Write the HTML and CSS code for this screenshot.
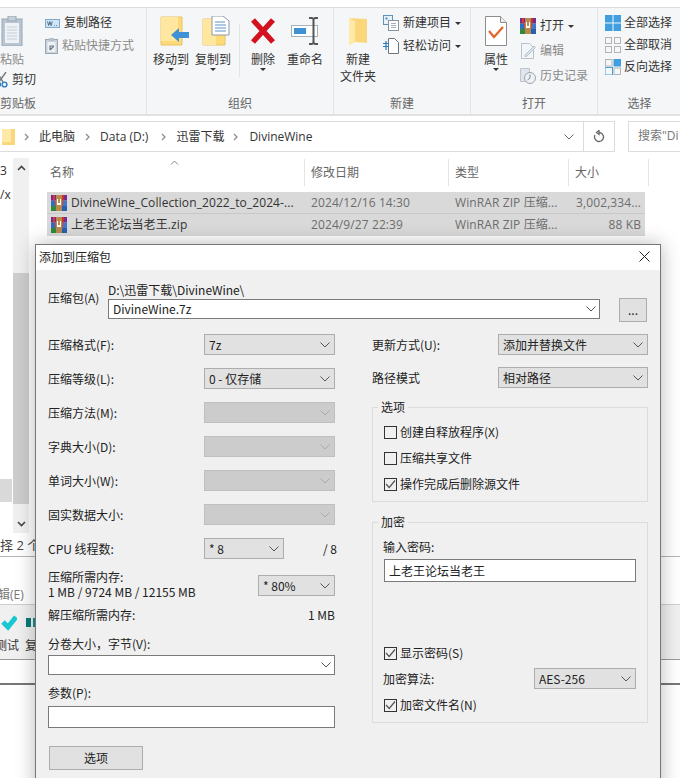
FILE: index.html
```html
<!DOCTYPE html>
<html lang="zh-CN">
<head>
    <meta charset="UTF-8">
    <meta name="viewport" content="width=device-width, initial-scale=1.0">
    <title>添加到压缩包</title>
    <link rel="stylesheet" href="styles.css">
</head>

<body>
    <svg class="icon-defs" width="0" height="0">
        <symbol id="chev" viewBox="0 0 10 6"><polyline points="0.5,0.5 5,5 9.5,0.5" fill="none" stroke="currentColor" stroke-width="1"/></symbol>
        <symbol id="tick" viewBox="0 0 11 11"><polyline points="1,5 4.2,8.5 10,1.5" fill="none" stroke="#555" stroke-width="1.2"/></symbol>
        <!-- rar archive, three stacked books with a strap -->
        <symbol id="rar" viewBox="0 0 16 16">
            <rect x="0" y="0" width="16" height="5.5" fill="#7a2a8c"/>
            <rect x="2" y="0" width="2" height="5.5" fill="#d23a3a"/>
            <rect x="10" y="0" width="3" height="5.5" fill="#c8322c"/>
            <rect x="0" y="5.5" width="16" height="5.5" fill="#c8503a"/>
            <rect x="0" y="5.5" width="4" height="5.5" fill="#2f6fc0"/>
            <rect x="12" y="5.5" width="4" height="5.5" fill="#3f78c8"/>
            <rect x="0" y="11" width="16" height="5" fill="#2f8a3c"/>
            <rect x="10" y="11" width="6" height="5" fill="#2a5fb0"/>
            <rect x="5" y="0" width="6" height="16" fill="#b98a50"/>
            <path d="M6 4h1v4h2v-4h1v6h-4z" fill="#fff"/>
        </symbol>
        <symbol id="grid-on" viewBox="0 0 16 16">
            <rect width="7.5" height="7.5" fill="#3f9fe0"/><rect x="8.5" width="7.5" height="7.5" fill="#3f9fe0"/>
            <rect y="8.5" width="7.5" height="7.5" fill="#3f9fe0"/><rect x="8.5" y="8.5" width="7.5" height="7.5" fill="#3f9fe0"/>
        </symbol>
        <symbol id="grid-off" viewBox="0 0 16 16">
            <g fill="none" stroke="#b4b4b4"><rect x=".5" y=".5" width="6" height="6"/><rect x="9.5" y=".5" width="6" height="6"/><rect x=".5" y="9.5" width="6" height="6"/><rect x="9.5" y="9.5" width="6" height="6"/></g>
        </symbol>
        <symbol id="grid-inv" viewBox="0 0 16 16">
            <rect x="8.5" width="7.5" height="7.5" fill="#3f9fe0"/><rect y="8.5" width="7.5" height="7.5" fill="none" stroke="#3f9fe0"/>
            <g fill="none" stroke="#b4b4b4"><rect x=".5" y=".5" width="6.5" height="6.5"/><rect x="9" y="9" width="6.5" height="6.5"/></g>
        </symbol>
    </svg>

    <div class="explorer">
        <div class="ribbon">
            <div class="ribbon-group group-clipboard">
                <div class="group-items">
                    <div class="clip-col">
                        <div class="big-btn btn-paste">
                            <svg class="big-icon" width="24" height="30" viewBox="0 0 24 30">
                                <rect x="2" y="3" width="20" height="27" fill="#b9c6d2" stroke="#9aa8b6"/>
                                <rect x="5" y="7" width="14" height="20" fill="#eef1f5"/>
                                <g stroke="#c5ced8"><path d="M7 11h10M7 14h10M7 17h10M7 20h10M7 23h10"/></g>
                                <rect x="8" y="0" width="8" height="5" fill="#c6ced6" stroke="#9aa8b6"/>
                            </svg>
                            <span class="muted">粘贴</span>
                        </div>
                        <div class="small-btn btn-cut">
                            <svg width="14" height="16" viewBox="0 0 14 16">
                                <path d="M3 0l6 10M12 0l-7 10" stroke="#777" stroke-width="1.4" fill="none"/>
                                <circle cx="4" cy="12.5" r="2.4" fill="none" stroke="#2a7fc4" stroke-width="1.4"/>
                                <circle cx="10.5" cy="12.5" r="2.4" fill="none" stroke="#2a7fc4" stroke-width="1.4"/>
                            </svg>
                            <span>剪切</span>
                        </div>
                    </div>
                    <div class="small-list list-clip">
                        <div class="small-btn">
                            <svg width="15" height="9" viewBox="0 0 15 9">
                                <rect x=".5" y=".5" width="14" height="8" fill="#cfe6f8" stroke="#7fa9c9"/>
                                <path d="M2.5 2.5l1.2 4 1.2-4 1.2 4 1.2-4M9 6.5h.8M11 6.5h.8" stroke="#33536e" fill="none" stroke-width=".8"/>
                            </svg>
                            <span>复制路径</span>
                        </div>
                        <div class="small-btn">
                            <svg width="13" height="16" viewBox="0 0 13 16">
                                <rect x=".5" y="1.5" width="12" height="14" fill="#c9d2da" stroke="#9ba7b2"/>
                                <rect x="2.5" y="4" width="8" height="10" fill="#eef1f4"/>
                                <path d="M5 12V8h4M5 12l4-4" stroke="#6c7884" stroke-width="1.2" fill="none"/>
                                <rect x="4" y="0" width="5" height="3" fill="#b7c1ca"/>
                            </svg>
                            <span class="muted">粘贴快捷方式</span>
                        </div>
                    </div>
                </div>
                <div class="group-label">剪贴板</div>
            </div>

            <div class="ribbon-group group-organize">
                <div class="group-items">
                    <div class="big-btn w36">
                        <svg class="big-icon" width="36" height="30" viewBox="0 0 36 30">
                            <path d="M8 1h21v28H8z" fill="#fdd978" stroke="#e8c266"/>
                            <path d="M8 1h17v24H8z" fill="#ffe79f"/>
                            <path d="M18 19l8-7v4h10v6H26v4z" fill="#3d91d4"/>
                        </svg>
                        <span>移动到</span>
                        <i class="caret"></i>
                    </div>
                    <div class="big-btn w36">
                        <svg class="big-icon" width="36" height="30" viewBox="0 0 36 30">
                            <path d="M8 3h22v26H8z" fill="#fdd978" stroke="#e8c266"/>
                            <path d="M8 3h13v26H8z" fill="#ffe79f"/>
                            <path d="M17 0h11l6 5v14H17z" fill="#fff" stroke="#8f9ba6"/>
                            <path d="M20 6h10M20 9h11M20 12h11M20 15h11" stroke="#5c93c4"/>
                        </svg>
                        <span>复制到</span>
                        <i class="caret"></i>
                    </div>
                    <div class="ribbon-sep"></div>
                    <div class="big-btn w24">
                        <svg class="big-icon" width="26" height="30" viewBox="0 0 26 30">
                            <path d="M3 4l20 22M23 4L3 26" stroke="#d4111f" stroke-width="5.4" fill="none"/>
                        </svg>
                        <span>删除</span>
                        <i class="caret"></i>
                    </div>
                    <div class="big-btn w36">
                        <svg class="big-icon" width="30" height="30" viewBox="0 0 30 30">
                            <rect x="1.5" y="9.5" width="26" height="11" fill="#fff" stroke="#a9b2ba"/>
                            <rect x="4" y="12" width="12" height="6" fill="#3d91d4"/>
                            <path d="M19 2h3l1.5 1 1.5-1h3M23.5 3v24M19 28h3l1.5-1 1.5 1h3" stroke="#555" stroke-width="2" fill="none"/>
                        </svg>
                        <span>重命名</span>
                    </div>
                </div>
                <div class="group-label">组织</div>
            </div>

            <div class="ribbon-group group-new">
                <div class="group-items">
                    <div class="big-btn w36 btn-newfolder">
                        <svg class="big-icon" width="20" height="30" viewBox="0 0 20 30">
                            <path d="M1 2l18 1v24L7 26l-6 3z" fill="#fbd77b"/>
                            <path d="M1 2l6 3v21l-6 3z" fill="#ffe9a8"/>
                        </svg>
                        <span>新建<br>文件夹</span>
                    </div>
                    <div class="small-list list-new">
                        <div class="small-btn">
                            <svg width="16" height="16" viewBox="0 0 16 16">
                                <rect x=".5" y=".5" width="9" height="9" fill="#e8f1f8" stroke="#5e93bd"/>
                                <rect x="2.5" y="2.5" width="2" height="2" fill="#3f8ec9"/>
                                <rect x="5.5" y="5.5" width="10" height="10" fill="#fff" stroke="#8b949c"/>
                                <path d="M8 8.5h5M8 10.5h5M8 12.5h5" stroke="#a6afb7"/>
                            </svg>
                            <span>新建项目</span>
                            <i class="caret side"></i>
                        </div>
                        <div class="small-btn">
                            <svg width="16" height="16" viewBox="0 0 16 16">
                                <path d="M5.5.5h6l4 4v11h-10z" fill="#fff" stroke="#6d7680"/>
                                <path d="M0 5.5h6M0 8.5h6M3 3v9" stroke="#2b7bb9" stroke-width="1.2" fill="none"/>
                            </svg>
                            <span>轻松访问</span>
                            <i class="caret side"></i>
                        </div>
                    </div>
                </div>
                <div class="group-label">新建</div>
            </div>

            <div class="ribbon-group group-open">
                <div class="group-items">
                    <div class="big-btn w24">
                        <svg class="big-icon" width="22" height="30" viewBox="0 0 22 30">
                            <path d="M.5.5h15l6 6v23H.5z" fill="#fff" stroke="#8d8d8d"/>
                            <path d="M15.5.5v6h6" fill="#eee" stroke="#8d8d8d"/>
                            <path d="M4 15l5 6 9-10" stroke="#e2662a" stroke-width="2.2" fill="none"/>
                        </svg>
                        <span>属性</span>
                        <i class="caret"></i>
                    </div>
                    <div class="small-list list-open">
                        <div class="small-btn">
                            <svg width="16" height="16"><use href="#rar"/></svg>
                            <span>打开</span>
                            <i class="caret side"></i>
                        </div>
                        <div class="small-btn">
                            <svg width="16" height="16" viewBox="0 0 16 16">
                                <path d="M1.5.5h8l4 4v11h-12z" fill="#f3f6f9" stroke="#b8c2cc"/>
                                <path d="M5 12l9-9 1.5 1.5-9 9H5z" fill="#dbe3ea" stroke="#b8c2cc"/>
                            </svg>
                            <span class="muted">编辑</span>
                        </div>
                        <div class="small-btn">
                            <svg width="16" height="16" viewBox="0 0 16 16">
                                <path d="M.5.5h9v13h-9z" fill="#dfe5ea" stroke="#bcc5cd"/>
                                <circle cx="10" cy="10" r="5.5" fill="#eef1f4" stroke="#9aa5af"/>
                                <path d="M10 6.5V10l-2.5 2" stroke="#7f8b96" fill="none"/>
                            </svg>
                            <span class="muted">历史记录</span>
                        </div>
                    </div>
                </div>
                <div class="group-label">打开</div>
            </div>

            <div class="ribbon-group group-select">
                <div class="group-items">
                    <div class="small-list list-select">
                        <div class="small-btn"><svg width="16" height="16"><use href="#grid-on"/></svg><span>全部选择</span></div>
                        <div class="small-btn"><svg width="16" height="16"><use href="#grid-off"/></svg><span>全部取消</span></div>
                        <div class="small-btn"><svg width="16" height="16"><use href="#grid-inv"/></svg><span>反向选择</span></div>
                    </div>
                </div>
                <div class="group-label">选择</div>
            </div>
        </div>

        <div class="address-row">
            <div class="address-box">
                <svg class="addr-folder" width="13" height="16" viewBox="0 0 13 16"><path d="M0 0h13v16H0z" fill="#fbd77b"/><path d="M0 0h9v13H0z" fill="#ffe9a8"/></svg>
                <svg class="addr-chev" width="5" height="8" viewBox="0 0 5 8"><polyline points="1,1 4,4 1,7" fill="none" stroke="#888" stroke-width="1.2"/></svg>
                <span class="crumb c1">此电脑</span>
                <svg class="addr-chev" width="5" height="8" viewBox="0 0 5 8"><polyline points="1,1 4,4 1,7" fill="none" stroke="#888" stroke-width="1.2"/></svg>
                <span class="crumb c2">Data (D:)</span>
                <svg class="addr-chev" width="5" height="8" viewBox="0 0 5 8"><polyline points="1,1 4,4 1,7" fill="none" stroke="#888" stroke-width="1.2"/></svg>
                <span class="crumb c3">迅雷下载</span>
                <svg class="addr-chev" width="5" height="8" viewBox="0 0 5 8"><polyline points="1,1 4,4 1,7" fill="none" stroke="#888" stroke-width="1.2"/></svg>
                <span class="crumb c4">DivineWine</span>
                <svg class="addr-down" width="10" height="6"><use href="#chev"/></svg>
                <div class="addr-refresh">
                    <svg width="12" height="13" viewBox="0 0 12 13"><path d="M6 2.5a4.5 4.5 0 1 1-4 2.5M6 .5v4l-2.5-2z" fill="none" stroke="#666" stroke-width="1.3"/></svg>
                </div>
            </div>
            <div class="search-box">搜索"Di</div>
        </div>

        <div class="browser">
            <div class="nav-pane">
                <div class="nav-text t1">3</div>
                <div class="nav-text t2">/x</div>
                <div class="nav-selected"></div>
            </div>
            <div class="scrollbar">
                <svg class="scroll-arrow up" width="9" height="6" viewBox="0 0 9 6"><polyline points="1,5 4.5,1.5 8,5" fill="none" stroke="#444" stroke-width="1.6"/></svg>
                <div class="scroll-thumb"></div>
                <svg class="scroll-arrow down" width="9" height="6" viewBox="0 0 9 6"><polyline points="1,1 4.5,4.5 8,1" fill="none" stroke="#444" stroke-width="1.6"/></svg>
            </div>
            <div class="file-pane">
                <div class="sort-caret"><svg width="9" height="5" viewBox="0 0 9 5"><polyline points="1,4.5 4.5,1 8,4.5" fill="none" stroke="#888"/></svg></div>
                <div class="file-head">
                    <div class="col-name">名称</div>
                    <div class="col-date">修改日期</div>
                    <div class="col-type">类型</div>
                    <div class="col-size">大小</div>
                </div>
                <div class="file-row">
                    <div class="cell-name"><svg width="16" height="16"><use href="#rar"/></svg><span>DivineWine_Collection_2022_to_2024-...</span></div>
                    <div class="cell-date">2024/12/16 14:30</div>
                    <div class="cell-type">WinRAR ZIP 压缩...</div>
                    <div class="cell-size">3,002,334...</div>
                </div>
                <div class="file-row">
                    <div class="cell-name"><svg width="16" height="16"><use href="#rar"/></svg><span>上老王论坛当老王.zip</span></div>
                    <div class="cell-date">2024/9/27 22:39</div>
                    <div class="cell-type">WinRAR ZIP 压缩...</div>
                    <div class="cell-size">88 KB</div>
                </div>
            </div>
        </div>

        <div class="status-row">择 2 个</div>

        <!-- the file manager window underneath -->
        <div class="menu-row">辑(E)</div>
        <div class="tool-row">
            <div class="tool-item tool-test">
                <svg width="24" height="16" viewBox="0 0 24 16"><path d="M10 7l5 5L23 2" stroke="#18c7d2" stroke-width="5" fill="none"/></svg>
                <span>测试</span>
            </div>
            <div class="tool-item tool-copy">
                <svg width="24" height="16" viewBox="0 0 24 16"><rect x="1" y="3" width="5" height="9" fill="#0d7a78"/><rect x="8" y="3" width="9" height="9" fill="#14908c"/></svg>
                <span>复制</span>
            </div>
        </div>
        <div class="blank-row"></div>
        <div class="rest-row"></div>
    </div>

    <div class="dialog">
        <div class="dialog-title">
            <span>添加到压缩包</span>
            <svg class="dialog-close" width="11" height="11" viewBox="0 0 11 11"><path d="M.5.5l10 10M10.5.5l-10 10" stroke="#222" fill="none"/></svg>
        </div>
        <div class="dialog-body">
            <div class="archive-row">
                <div class="archive-label">压缩包(A)</div>
                <div class="archive-path">
                    <div class="path-text">D:\迅雷下载\DivineWine\</div>
                    <div class="field h20">DivineWine.7z<svg class="chev" width="10" height="6"><use href="#chev"/></svg></div>
                </div>
                <div class="browse-btn">...</div>
            </div>

            <div class="columns">
                <div class="col-left">
                    <div class="form-row"><span>压缩格式(F):</span><div class="combo w131">7z<svg class="chev" width="10" height="6"><use href="#chev"/></svg></div></div>
                    <div class="form-row"><span>压缩等级(L):</span><div class="combo w131">0 - 仅存储<svg class="chev" width="10" height="6"><use href="#chev"/></svg></div></div>
                    <div class="form-row"><span>压缩方法(M):</span><div class="combo w131 off"><svg class="chev" width="10" height="6"><use href="#chev"/></svg></div></div>
                    <div class="form-row"><span>字典大小(D):</span><div class="combo w131 off"><svg class="chev" width="10" height="6"><use href="#chev"/></svg></div></div>
                    <div class="form-row"><span>单词大小(W):</span><div class="combo w131 off"><svg class="chev" width="10" height="6"><use href="#chev"/></svg></div></div>
                    <div class="form-row"><span>固实数据大小:</span><div class="combo w131 off"><svg class="chev" width="10" height="6"><use href="#chev"/></svg></div></div>
                    <div class="form-row cpu-row">
                        <span class="cpu-label">CPU 线程数:</span>
                        <div class="combo w80">* 8<svg class="chev" width="10" height="6"><use href="#chev"/></svg></div>
                        <span class="cpu-max">/ 8</span>
                    </div>
                    <div class="mem-row">
                        <div class="mem-label">压缩所需内存:<br>1 MB / 9724 MB / 12155 MB</div>
                        <div class="combo w77">* 80%<svg class="chev" width="10" height="6"><use href="#chev"/></svg></div>
                    </div>
                    <div class="unpack-row"><span>解压缩所需内存:</span><span>1 MB</span></div>
                    <div class="stack-label split-label">分卷大小，字节(V):</div>
                    <div class="field h20">&nbsp;<svg class="chev" width="10" height="6"><use href="#chev"/></svg></div>
                    <div class="stack-label param-label">参数(P):</div>
                    <div class="field h22"></div>
                    <div class="options-btn">选项</div>
                </div>

                <div class="col-right">
                    <div class="right-row"><span>更新方式(U):</span><div class="combo w150">添加并替换文件<svg class="chev" width="10" height="6"><use href="#chev"/></svg></div></div>
                    <div class="right-row"><span>路径模式</span><div class="combo w150">相对路径<svg class="chev" width="10" height="6"><use href="#chev"/></svg></div></div>

                    <fieldset class="box box-options">
                        <legend>选项</legend>
                        <div class="check-row"><span class="check"></span>创建自释放程序(X)</div>
                        <div class="check-row"><span class="check"></span>压缩共享文件</div>
                        <div class="check-row"><span class="check"><svg width="11" height="11"><use href="#tick"/></svg></span>操作完成后删除源文件</div>
                    </fieldset>

                    <fieldset class="box box-crypt">
                        <legend>加密</legend>
                        <div class="pw-label">输入密码:</div>
                        <div class="field h23">上老王论坛当老王</div>
                        <div class="check-row show-pw"><span class="check"><svg width="11" height="11"><use href="#tick"/></svg></span>显示密码(S)</div>
                        <div class="algo-row"><span>加密算法:</span><div class="combo w102">AES-256<svg class="chev" width="10" height="6"><use href="#chev"/></svg></div></div>
                        <div class="check-row crypt-names"><span class="check"><svg width="11" height="11"><use href="#tick"/></svg></span>加密文件名(N)</div>
                    </fieldset>
                </div>
            </div>
        </div>
    </div>
</body>

</html>
```

FILE: styles.css
```css
*{
  box-sizing: border-box;
}
html,body{
  margin: 0;
  height: 100%;
  overflow: hidden;
}
body{
  position: relative;
  width: 680px;
  height: 778px;
  background-color: #fff;
  color: #333;
  font-family: "Open Sans", "Noto Sans CJK SC", sans-serif;
  font-size: 12px;
  line-height: 16px;
}
svg{
  display: block;
  flex: none;
}
.icon-defs{
  position: absolute;
}
.muted{
  color: #8b8b8b;
}

/* ribbon */
.explorer{
  display: flex;
  flex-direction: column;
  width: 680px;
  height: 778px;
  overflow: hidden;
}
.ribbon{
  display: flex;
  height: 109px;
  margin-top: 7px;
  background-color: #f5f6f7;
  border-top: 1px solid #dcdcdc;
  border-bottom: 2px solid #e2e2e2;
}
.ribbon-group{
  display: flex;
  flex-direction: column;
  flex: none;
  border-right: 1px solid #e2e3e5;
}
.group-items{
  display: flex;
  flex: 1;
  padding-top: 8px;
}
.group-label{
  height: 18px;
  text-align: center;
  color: #666;
}
.group-clipboard{
  width: 257px;
  margin-left: -110px;
}
.group-clipboard .group-items{
  padding-left: 98px;
}
.group-organize{
  width: 187px;
}
.group-organize .group-items{
  padding-left: 6px;
  gap: 6px;
}
.group-new{
  width: 137px;
}
.group-new .group-items{
  padding-left: 6px;
}
.group-open{
  width: 127px;
}
.group-open .group-items{
  padding-left: 13px;
}
.group-select{
  width: 83px;
  border-right: none;
}
.big-btn{
  display: flex;
  flex-direction: column;
  align-items: center;
  flex: none;
  text-align: center;
  white-space: nowrap;
}
.big-icon{
  margin-bottom: 6px;
}
.btn-newfolder{
  line-height: 17px;
}
.btn-newfolder .big-icon{
  margin-bottom: 5px;
}
.w36{
  width: 36px;
}
.w24{
  width: 24px;
}
.caret{
  display: block;
  width: 0;
  height: 0;
  border: 3px solid transparent;
  border-top: 3px solid #333;
  border-bottom: none;
}
.caret.side{
  margin-left: 0;
}
.ribbon-sep{
  width: 1px;
  height: 53px;
  margin: 8px 5px 0 2px;
  background-color: #e2e3e5;
}
.group-organize .w24{
  margin-right: 6px;
}
.clip-col{
  width: 57px;
  flex: none;
}
.btn-paste{
  width: 48px;
}
.btn-cut{
  margin: 4px 0 0 6px;
  gap: 6px;
}
.small-btn{
  display: flex;
  align-items: center;
  height: 16px;
  gap: 4px;
  white-space: nowrap;
}
.small-list{
  display: flex;
  flex-direction: column;
}
.list-clip{
  gap: 7px;
  margin-top: -1px;
}
.list-new{
  margin: -1px 0 0 7px;
  gap: 7px;
}
.list-open{
  margin: 2px 0 0 12px;
  gap: 9px;
}
.list-select{
  margin: -1px 0 0 7px;
  gap: 6px;
}
.list-select .small-btn{
  gap: 3px;
}

/* address bar */
.address-row{
  display: flex;
  height: 31px;
  margin-top: 5px;
  flex: none;
}
.address-box{
  display: flex;
  align-items: center;
  width: 615px;
  flex: none;
  padding-left: 2px;
  border: 1px solid #dcdcdc;
  border-left: none;
}
.addr-folder{
  margin-right: 9px;
}
.crumb{
  white-space: nowrap;
}
.crumb.c1{
  margin: 0 10px;
}
.crumb.c2{
  margin: 0 13px 0 10px;
}
.crumb.c3{
  margin: 0 9px 0 10px;
}
.crumb.c4{
  margin-left: 11px;
}
.addr-down{
  margin-left: auto;
  margin-right: 9px;
  color: #666;
}
.addr-refresh{
  display: flex;
  align-items: center;
  justify-content: center;
  width: 31px;
  height: 100%;
  border-left: 1px solid #dcdcdc;
}
.search-box{
  width: 52px;
  flex: none;
  margin-left: 13px;
  padding: 6px 0 0 9px;
  border: 1px solid #dcdcdc;
  border-right: none;
  white-space: nowrap;
  overflow: hidden;
  color: #777;
}

/* file list */
.browser{
  display: flex;
  height: 381px;
  flex: none;
}
.nav-pane{
  display: flex;
  flex-direction: column;
  width: 13px;
  overflow: hidden;
}
.nav-text.t1{
  margin-top: 11px;
}
.nav-text.t2{
  margin-top: 8px;
}
.nav-selected{
  width: 12px;
  height: 23px;
  margin-top: 276px;
  background-color: #d9d9d9;
}
.scrollbar{
  display: flex;
  flex-direction: column;
  align-items: center;
  width: 16px;
  margin-top: 6px;
  background-color: #f0f0f0;
}
.scroll-arrow.up{
  margin-top: 7px;
}
.scroll-thumb{
  width: 16px;
  height: 231px;
  margin-top: 102px;
  background-color: #cdcdcd;
}
.scroll-arrow.down{
  margin-top: 17px;
}
.file-pane{
  position: relative;
  width: 620px;
}
.sort-caret{
  position: absolute;
  left: 141px;
  top: 8px;
}
.file-head{
  display: grid;
  grid-template-columns: 276px 144px 120px 80px;
  height: 27px;
  margin-top: 7px;
  color: #666;
}
.file-head div{
  display: flex;
  align-items: center;
  padding-left: 6px;
  border-right: 1px solid #e5e5e5;
}
.file-head .col-name{
  padding-left: 21px;
}
.file-row{
  display: grid;
  grid-template-columns: 257px 144px 120px 77px;
  width: 598px;
  height: 22px;
  margin-left: 18px;
  background-color: #d9d9d9;
  color: #6d6d6d;
  align-items: center;
  white-space: nowrap;
  letter-spacing: .1px;
}
.file-head + .file-row{
  margin-top: 6px;
  border-bottom: 1px solid #c8c8c8;
}
.cell-name{
  display: flex;
  align-items: center;
  gap: 4px;
  padding-left: 4px;
  color: #333;
}
.cell-date,.cell-type{
  padding-left: 7px;
}
.cell-size{
  padding-right: 4px;
  text-align: right;
}

/* window underneath */
.status-row{
  height: 24px;
  flex: none;
  padding-top: 4px;
  color: #444;
  border-bottom: 1px solid #b5b5b5;
  font-size: 13px;
}
.menu-row{
  height: 48px;
  flex: none;
  margin-left: -2px;
  padding-top: 30px;
  color: #777;
  border-bottom: 1px solid #cfcfcf;
}
.tool-row{
  display: flex;
  height: 55px;
  flex: none;
  margin-left: -8px;
  background-color: #f0f0f0;
  border-bottom: 1px solid #999;
}
.tool-item{
  display: flex;
  flex-direction: column;
  align-items: center;
  width: 30px;
  margin-top: 10px;
  gap: 7px;
}
.tool-test svg{
  margin-left: -4px;
}
.blank-row{
  height: 25px;
  flex: none;
  border-bottom: 2px solid #777;
}
.rest-row{
  flex: 1;
}

/* compress dialog */
.dialog{
  position: absolute;
  left: 35px;
  top: 244px;
  width: 626px;
  height: 560px;
  background-color: #f0f0f0;
  border: 1px solid #777;
  box-shadow: 0 0 18px rgba(0,0,0,.28);
  font-family: "Noto Sans CJK SC", sans-serif;
  color: #222;
}
.dialog-title{
  display: flex;
  align-items: center;
  justify-content: space-between;
  height: 25px;
  padding: 0 10px 2px 3px;
  background-color: #fff;
}
.dialog-body{
  padding: 13px 12px 0 12px;
}
.archive-row{
  display: flex;
}
.archive-label{
  width: 60px;
  margin-top: 7px;
}
.archive-path{
  width: 492px;
}
.path-text{
  height: 16px;
  line-height: 14px;
}
.field{
  display: flex;
  align-items: center;
  padding-left: 4px;
  background-color: #fff;
  border: 1px solid #7a7a7a;
}
.field .chev{
  margin-left: auto;
  margin-right: 3px;
  color: #555;
}
.h20{
  height: 20px;
}
.h22{
  height: 22px;
}
.h23{
  height: 23px;
}
.browse-btn{
  width: 28px;
  height: 24px;
  margin: 15px 0 0 19px;
  background-color: #e1e1e1;
  border: 1px solid #adadad;
  text-align: center;
  line-height: 22px;
}
.columns{
  display: flex;
  gap: 37px;
  margin-top: 12px;
}
.col-left{
  width: 287px;
  flex: none;
}
.col-right{
  width: 276px;
  flex: none;
}
.form-row,.right-row{
  display: flex;
  align-items: center;
  justify-content: space-between;
  height: 21px;
  margin-bottom: 13px;
}
.right-row{
  margin-bottom: 12px;
}
.combo{
  display: flex;
  align-items: center;
  height: 21px;
  padding-left: 4px;
  background-color: #e1e1e1;
  border: 1px solid #adadad;
}
.combo .chev{
  margin-left: auto;
  margin-right: 4px;
  color: #555;
}
.combo.off{
  background-color: #ccc;
  border-color: #bfbfbf;
}
.combo.off .chev{
  color: #aaa;
}
.w131{
  width: 131px;
}
.w150{
  width: 150px;
}
.w102{
  width: 102px;
}
.w80{
  width: 80px;
}
.w77{
  width: 77px;
}
.cpu-label{
  width: 156px;
}
.cpu-row{
  justify-content: flex-start;
  margin-bottom: 10px;
}
.cpu-max{
  margin-left: auto;
  margin-right: -2px;
}
.mem-row{
  display: flex;
  justify-content: space-between;
  height: 30px;
}
.mem-row .combo{
  margin-top: 6px;
}
.mem-label{
  line-height: 15px;
}
.unpack-row{
  display: flex;
  justify-content: space-between;
  margin-top: 8px;
}
.split-label{
  margin: 13px 0 3px;
}
.param-label{
  margin: 10px 0 5px;
}
.options-btn{
  width: 94px;
  height: 24px;
  margin: 18px 0 0 1px;
  background-color: #e1e1e1;
  border: 1px solid #adadad;
  text-align: center;
  line-height: 22px;
}
.box{
  margin: 0;
  min-width: 0;
  border: 1px solid #dcdcdc;
  padding: 9px 11px 9px;
}
.box legend{
  margin-left: -6px;
  padding: 0 3px;
  line-height: 16px;
}
.box-options{
  margin-top: -1px;
}
.box-crypt{
  margin-top: 12px;
  padding-bottom: 9px;
}
.check-row{
  display: flex;
  align-items: center;
  gap: 3px;
  height: 16px;
  margin-bottom: 10px;
}
.box-options .check-row:last-child{
  margin-bottom: 0;
}
.check{
  display: flex;
  align-items: center;
  justify-content: center;
  width: 13px;
  height: 13px;
  flex: none;
  border: 1px solid #333;
}
.pw-label{
  margin: 0 0 4px -1px;
}
.show-pw{
  margin: 63px 0 7px;
}
.algo-row{
  display: flex;
  align-items: center;
  justify-content: space-between;
  height: 21px;
  margin-left: -1px;
}
.crypt-names{
  margin: 8px 0 0;
}
```
